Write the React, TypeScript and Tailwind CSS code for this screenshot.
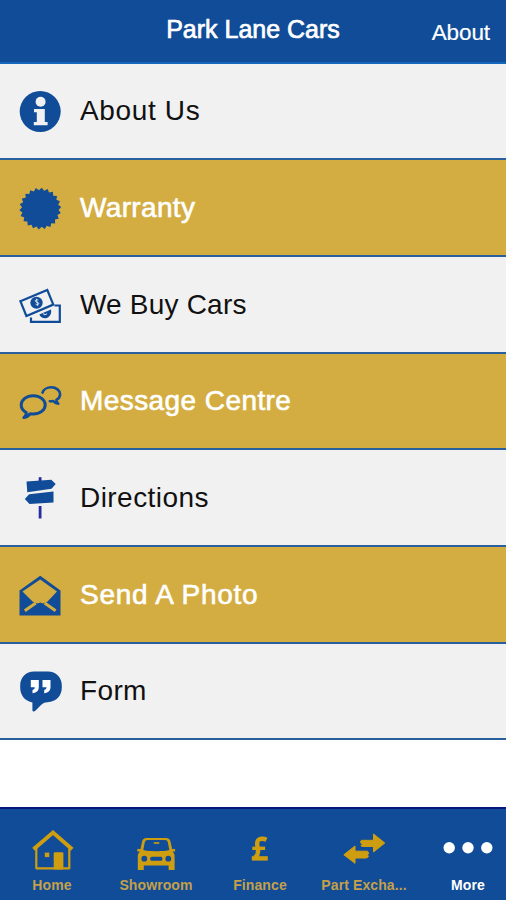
import React from 'react';

const BLUE = '#104c97';
const GOLD = '#cf9d10';

const badgePoints = Array.from({ length: 44 }, (_, i) => {
  const radius = i % 2 === 0 ? 21 : 18.3;
  const angle = (i / 44) * Math.PI * 2 - Math.PI / 2 + 0.07;
  return `${(22.3 + radius * Math.cos(angle)).toFixed(2)},${(22.6 + radius * Math.sin(angle)).toFixed(2)}`;
}).join(' ');

const InfoIcon = () => (
  <>
    <circle cx="22.2" cy="22.5" r="20.5" fill={BLUE} />
    <circle cx="22.6" cy="12.8" r="5" fill="#f1f1f1" />
    <path d="M16 20h10.8v13h2.800v3.200H15.800v-3.200h3v-9.800H16z" fill="#f1f1f1" />
  </>
);

const BadgeIcon = () => <polygon points={badgePoints} fill={BLUE} />;

const CashIcon = () => (
  <g fill="none" stroke={BLUE} strokeWidth="2.200">
    <path d="M2.400 18.200 29.300 7l6 14.600L8.400 33z" />
    <path d="M36.500 22.500h5.300v16.300H13v-4.200" />
    <ellipse cx="18.500" cy="19.700" rx="6.200" ry="6" fill={BLUE} stroke="none" />
    <path d="M21.300 31.600 33 26.600c1 3.900-1.500 8.400-5.300 8.700-3 .2-5.500-1.300-6.400-3.700z" fill={BLUE} stroke="none" />
    <path d="M20.300 17.200c-1-1.200-3.500-.4-3 1 .5 1.300 3.200.6 3.500 2.100.3 1.400-2.200 2-3.200.9M18.300 15.700l1.500 7.200" stroke="#dfe6f0" strokeWidth="1" />
    <path d="M25.500 30.300c.2 2 2.500 1.700 3.300.2" stroke="#dfe6f0" strokeWidth="1.100" />
  </g>
);

const ChatsIcon = () => (
  <g fill="none" stroke={BLUE} strokeWidth="3" strokeLinecap="round" strokeLinejoin="round">
    <path d="M8.300 33.600C5.200 31.900 3.200 29 3.200 26c0-5.200 5.400-9.300 12-9.300s12 4.100 12 9.200-5.400 9.200-12 9.200c-1 0-2.100-.1-3.100-.3-1.600 1.900-3.900 3.800-6.300 3.800 1.600-1.200 2.500-3.200 2.500-5z" />
    <path d="M24.500 13.600c1-3.200 4.700-5.300 8.700-5.300 5 0 8.900 3.200 8.900 7 0 2.500-1.600 4.500-3.700 5.700.1 1.500.8 2.800 1.900 3.700-2.200-.1-4.100-1.300-5-2.600-1.200.2-2.300.2-3.500.1" strokeWidth="2.600" />
  </g>
);

const SignpostIcon = () => (
  <g fill={BLUE}>
    <rect x="20.700" y="1.200" width="2.800" height="6" fill="#2b2ba0" />
    <rect x="20.700" y="30" width="2.800" height="12.500" fill="#2b2ba0" />
    <path d="M8.500 5.500 33.300 3.800 37.700 8l-4.200 4.700L9.300 16.300z" />
    <path d="M6.800 23l4.400-4.700 24.300-2.800v10.900l-24 1.500z" />
  </g>
);

const MailIcon = () => (
  <>
    <path d="M1.500 17.500 22.200 2.700 42.500 17.500v25h-41z" fill={BLUE} />
    <path d="M22.200 6.500 39 18.500 29.300 28.800 22.200 31.500 14.800 28.800 4.500 18.500z" fill="#d4ad42" />
    <path d="M17.500 31.500 22.200 29.500 27 31.500 30 34H14.500z" fill={BLUE} />
    <path d="M6.800 37.800 17.800 30M37.600 37.800 26.600 30" stroke="#d4ad42" strokeWidth="3" />
  </>
);

const QuoteIcon = () => (
  <>
    <path d="M16 2.500h14c8 0 13.800 6 13.800 14v2c0 8-5.300 13.800-12.800 14.600-2.500.3-4.500.4-6 1.300-2.800 1.700-5 5-8 7.500-1.200.9-2.600.5-2.600-1v-7.500C7 32 2.200 26.500 2.200 18.500v-2c0-8 5.800-14 13.800-14z" fill={BLUE} />
    <path d="M12.800 11h8v7c0 3.800-2 5.800-6.300 6.200v-3.300c1.600-.3 2.200-1 2.300-2.600h-4zM24.500 11h8v7c0 3.800-2 5.800-6.300 6.200v-3.300c1.600-.3 2.200-1 2.300-2.600h-4z" fill="#fff" />
  </>
);

const menu = [
  { label: 'About Us', Icon: InfoIcon, height: 'h-24', tracking: 'tracking-[0.65px]' },
  { label: 'Warranty', Icon: BadgeIcon, height: 'h-[97px]', tracking: 'tracking-[0.35px]' },
  { label: 'We Buy Cars', Icon: CashIcon, height: 'h-[97px]', tracking: 'tracking-[0.2px]' },
  { label: 'Message Centre', Icon: ChatsIcon, height: 'h-24', tracking: 'tracking-[0.42px]' },
  { label: 'Directions', Icon: SignpostIcon, height: 'h-[97px]', tracking: 'tracking-[0.45px]' },
  { label: 'Send A Photo', Icon: MailIcon, height: 'h-[97px]', tracking: 'tracking-[0.72px]' },
  { label: 'Form', Icon: QuoteIcon, height: 'h-24', tracking: 'tracking-[0.35px]' },
];

const HomeIcon = () => (
  <g fill="none" stroke={GOLD} strokeWidth="2.200" strokeLinejoin="round" transform="translate(0.8 0.8)">
    <path d="M5.500 20v20.500h33V20" />
    <path d="M2.700 21.500 22.200 4.800l19.200 16.700" strokeWidth="4" strokeLinejoin="miter" />
    <rect x="24" y="25.500" width="7.500" height="15" fill={GOLD} />
    <rect x="14" y="24.800" width="4.500" height="4.500" fill={GOLD} stroke="none" />
  </g>
);

const CarIcon = () => (
  <g transform="translate(0.3 1.500)">
    <path d="M12.500 9.500h19c3 0 4.300 1.500 4.800 4l1.500 7h3v2.500h-2.500c1.500 1.500 2 3 2 5v13.500h-6v-4.500H9.500v4.500h-6V28c0-2 .6-3.500 2-5H3v-2.500h3.200l1.500-7c.5-2.500 1.800-4 4.800-4z" fill={GOLD} />
    <path d="M13.500 11.500h17c1.800 0 2.700.8 3.100 2.500l1.400 7.500c-4 1.600-22 1.600-26 0l1.400-7.500c.4-1.700 1.300-2.500 3.100-2.500z" fill={BLUE} />
    <path d="M19.500 14.500h5.500" stroke={GOLD} strokeWidth="1.600" />
    <circle cx="10" cy="30.200" r="2.900" fill={BLUE} />
    <circle cx="34" cy="30.200" r="2.900" fill={BLUE} />
    <rect x="16" y="28.300" width="12" height="4" rx="1.500" fill={BLUE} />
  </g>
);

const PoundIcon = () => (
  <g fill="none" stroke={GOLD} transform="translate(-0.5 0)">
    <path d="M29 12.800c-2.500-1.200-5.200-1.500-7.200-.4-2.300 1.300-2.500 4-1.800 7 1.100 4.500 1 8.800-2.800 11.500" strokeWidth="4.400" />
    <path d="M14.800 21.300h12.800" strokeWidth="3.400" />
    <path d="M14.300 31.400h16" strokeWidth="4.400" />
  </g>
);

const ExchangeIcon = () => (
  <g fill={GOLD} stroke={GOLD} strokeWidth="1" strokeLinejoin="round">
    <path d="M19.500 13.300h12V7L42.800 16 31.500 25v-5.500H21c-2.500 0-2.500-1.500-.3-2.200-1.600-.3-3.200-2.700-1.200-4z" />
    <path d="M25.200 24.200H13v-5.200L1.800 27.800 13 36.300V31h11c2.500-.5 3.500-2 1-3.200 2-.3 2.500-2.300.2-3.600z" />
  </g>
);

const DotsIcon = () => (
  <g fill="#fff">
    <circle cx="3.200" cy="20.800" r="5.700" />
    <circle cx="22" cy="20.800" r="5.700" />
    <circle cx="40.800" cy="20.800" r="5.700" />
  </g>
);

const tabs = [
  { label: 'Home', Icon: HomeIcon },
  { label: 'Showroom', Icon: CarIcon },
  { label: 'Finance', Icon: PoundIcon },
  { label: 'Part Excha...', Icon: ExchangeIcon },
  { label: 'More', Icon: DotsIcon, active: true },
];

export default function App() {
  return (
    <div className="flex h-[900px] w-[506px] flex-col overflow-hidden bg-white font-['Liberation_Sans',Arial,sans-serif]">
      {/* Title bar */}
      <header className="grid h-16 shrink-0 grid-cols-[1fr_auto_1fr] items-center border-b-2 border-[#1467bd] bg-[#104c97] text-white">
        <span />
        <h1 className="whitespace-nowrap pb-[2px] text-[25px] [-webkit-text-stroke:0.7px_white]">Park Lane Cars</h1>
        <button className="justify-self-end whitespace-nowrap pr-4 pt-[3px] text-[22.5px] tracking-[-0.1px] [-webkit-text-stroke:0.2px_white]">
          About
        </button>
      </header>

      {/* Menu rows, alternating grey and gold */}
      <main className="flex-1">
        {menu.map(({ label, Icon, height, tracking }, i) => (
          <div
            key={label}
            className={`flex items-center border-b-2 border-[#2a5f9e] pl-[18px] ${height} ${
              i % 2 ? 'bg-[#d4ad42] text-white [-webkit-text-stroke:0.6px_white]' : 'bg-[#f1f1f1] text-[#111]'
            }`}
          >
            <svg viewBox="0 0 44 44" className="h-11 w-11 shrink-0 overflow-visible">
              <Icon />
            </svg>
            <span className={`ml-[18px] whitespace-nowrap text-[28px] ${tracking}`}>{label}</span>
          </div>
        ))}
      </main>

      {/* Tab bar */}
      <nav className="flex h-[93px] shrink-0 border-t-2 border-[#06177d] bg-[#104c97]">
        {tabs.map(({ label, Icon, active }) => (
          <button
            key={label}
            className={`flex w-[104px] shrink-0 flex-col items-center pt-[18px] text-[14px] font-bold tracking-[0.1px] ${
              active ? 'text-white' : 'text-[#c4a04a]'
            }`}
          >
            <svg viewBox="0 0 44 44" className="h-11 w-11 shrink-0 overflow-visible">
              <Icon />
            </svg>
            <span className="mt-[6px] whitespace-nowrap leading-4">{label}</span>
          </button>
        ))}
      </nav>
    </div>
  );
}
